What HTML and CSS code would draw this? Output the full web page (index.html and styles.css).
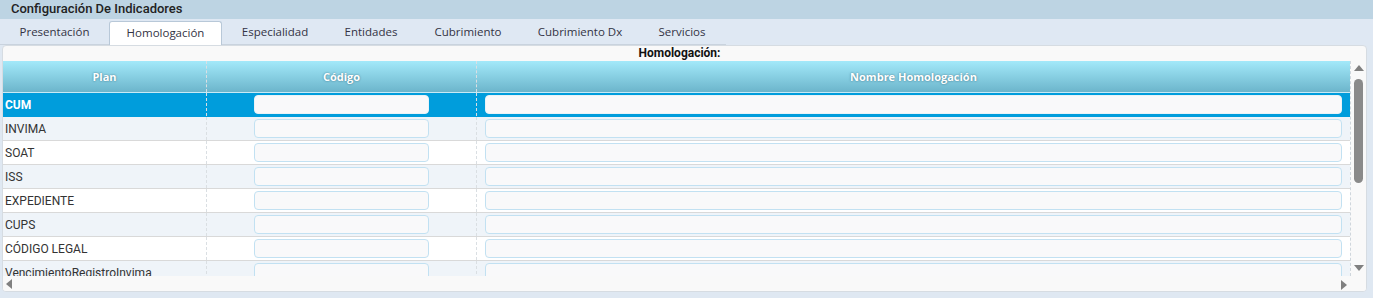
FILE: index.html
```html
<!DOCTYPE html>
<html lang="es">
<head>
  <meta charset="UTF-8">
  <title>Configuración De Indicadores</title>
  <link rel="stylesheet" href="styles.css">
</head>
<body>
  <!-- Title -->
  <div class="title-bar">Configuración De Indicadores</div>

  <!-- Tabs -->
  <div class="tab-bar">
    <div class="tabs">
      <div class="tab">Presentación</div>
      <div class="tab active">Homologación</div>
      <div class="tab">Especialidad</div>
      <div class="tab">Entidades</div>
      <div class="tab">Cubrimiento</div>
      <div class="tab">Cubrimiento Dx</div>
      <div class="tab">Servicios</div>
    </div>
  </div>

  <!-- Panel -->
  <div class="panel">
    <div class="panel-caption">Homologación:</div>
    <div class="grid-wrap">
      <div class="grid">
        <div class="grid-head">
          <div class="col col-plan">Plan</div>
          <div class="col col-code">Código</div>
          <div class="col col-name">Nombre Homologación</div>
        </div>
        <div class="grid-body">
          <div class="row selected">
            <div class="col col-plan">CUM</div>
            <div class="col col-code"><input class="field code-field"></div>
            <div class="col col-name"><input class="field"></div>
          </div>
          <div class="row alt">
            <div class="col col-plan">INVIMA</div>
            <div class="col col-code"><input class="field code-field"></div>
            <div class="col col-name"><input class="field"></div>
          </div>
          <div class="row">
            <div class="col col-plan">SOAT</div>
            <div class="col col-code"><input class="field code-field"></div>
            <div class="col col-name"><input class="field"></div>
          </div>
          <div class="row alt">
            <div class="col col-plan">ISS</div>
            <div class="col col-code"><input class="field code-field"></div>
            <div class="col col-name"><input class="field"></div>
          </div>
          <div class="row">
            <div class="col col-plan">EXPEDIENTE</div>
            <div class="col col-code"><input class="field code-field"></div>
            <div class="col col-name"><input class="field"></div>
          </div>
          <div class="row alt">
            <div class="col col-plan">CUPS</div>
            <div class="col col-code"><input class="field code-field"></div>
            <div class="col col-name"><input class="field"></div>
          </div>
          <div class="row">
            <div class="col col-plan">CÓDIGO LEGAL</div>
            <div class="col col-code"><input class="field code-field"></div>
            <div class="col col-name"><input class="field"></div>
          </div>
          <div class="row alt">
            <div class="col col-plan">VencimientoRegistroInvima</div>
            <div class="col col-code"><input class="field code-field"></div>
            <div class="col col-name"><input class="field"></div>
          </div>
        </div>
      </div>
      <!-- Vertical scrollbar -->
      <div class="vscroll">
        <span class="arrow-up"></span>
        <span class="thumb"></span>
        <span class="arrow-down"></span>
      </div>
    </div>
    <!-- Horizontal scrollbar -->
    <div class="hscroll">
      <span class="arrow-left"></span>
      <span class="arrow-right"></span>
    </div>
  </div>
</body>
</html>
```

FILE: styles.css
```css
* {
  margin: 0;
  padding: 0;
  box-sizing: border-box;
}
body {
  font-family: Roboto, 'Liberation Sans', sans-serif;
  font-size: 12px;
  color: #333;
  background: #dfe8f2;
  width: 1373px;
  height: 298px;
  overflow: hidden;
}

/* Title */
.title-bar {
  height: 19px;
  line-height: 18px;
  padding-left: 11px;
  background: #bdd4e3;
  color: #222;
  font-size: 13px;
  font-weight: 500;
}

/* Tabs */
.tab-bar {
  height: 26px;
  padding-top: 2px;
  background: #dfe8f3;
}
.tabs {
  display: flex;
  width: 726px;
  height: 24px;
  border-bottom: 1px solid #c9d3de;
}
.tab {
  height: 24px;
  line-height: 22px;
  font-family: 'Open Sans', 'Noto Sans', sans-serif;
  font-size: 11.5px;
  color: #334;
  text-align: center;
  white-space: nowrap;
}
.tab:nth-child(1) { width: 109px; }
.tab:nth-child(2) { width: 113px; }
.tab:nth-child(3) { width: 106px; }
.tab:nth-child(4) { width: 86px; }
.tab:nth-child(5) { width: 108px; }
.tab:nth-child(6) { width: 116px; }
.tab:nth-child(7) { width: 88px; }
.tab.active {
  background: #fff;
  border: 1px solid #b8c8d8;
  border-bottom: none;
  border-radius: 3px 3px 0 0;
}

/* Panel */
.panel {
  margin: 0 6px 0 2px;
  height: 247px;
  background: #f9f9f9;
  border: 1px solid #d6dce2;
  border-radius: 4px;
  overflow: hidden;
}
.panel-caption {
  height: 15px;
  line-height: 14px;
  text-align: center;
  font-weight: 700;
  font-size: 12px;
  color: #111;
  padding-right: 10px;
}
.grid-wrap {
  display: flex;
  height: 215px;
}
.grid {
  width: 1349px;
  overflow: hidden;
  border-right: 1px dashed #cfd6dc;
}

/* Grid header */
.grid-head {
  display: flex;
  height: 32px;
  background: linear-gradient(#a3e9fa, #6cb5cb);
  border-bottom: 1px solid #c9eaf5;
  color: #fff;
  font-family: 'Open Sans', 'Noto Sans', sans-serif;
  font-weight: 700;
  font-size: 11px;
  text-shadow: 0 0 2px rgba(40, 90, 110, 0.8);
}
.grid-head .col {
  display: flex;
  align-items: center;
  justify-content: center;
}
.col {
  height: 100%;
}
.col-plan {
  width: 204px;
  border-right: 1px dashed #dadfe3;
}
.col-code {
  width: 270px;
  border-right: 1px dashed #dadfe3;
}
.col-name {
  flex: 1;
}

/* Grid rows */
.row {
  display: flex;
  height: 24px;
  background: #fff;
  border-bottom: 1px solid #d9d9d9;
}
.row.alt {
  background: #eff4f9;
}
.row.selected {
  background: #009ddc;
  color: #fff;
  font-weight: 700;
  border-bottom-color: #009ddc;
}
.row .col-plan {
  padding-left: 2px;
  line-height: 24px;
  white-space: nowrap;
}
.row .col-code,
.row .col-name {
  display: flex;
  align-items: center;
  justify-content: center;
  padding: 0 8px;
}
.field {
  display: block;
  height: 19px;
  width: 100%;
  background: #f9f9fa;
  border: 1px solid #c2e1f2;
  border-radius: 4px;
  outline: none;
}
.code-field {
  width: 175px;
}
.selected .field {
  border-color: #e9f3f8;
}

/* Vertical scrollbar */
.vscroll {
  width: 15px;
  position: relative;
  background: #f9f9f9;
}
.arrow-up,
.arrow-down {
  position: absolute;
  left: 3px;
  width: 0;
  height: 0;
  border-left: 5px solid transparent;
  border-right: 5px solid transparent;
}
.arrow-up {
  top: 4px;
  border-bottom: 6px solid #808080;
}
.arrow-down {
  top: 204px;
  border-top: 6px solid #808080;
}
.thumb {
  position: absolute;
  left: 3px;
  top: 18px;
  width: 9px;
  height: 104px;
  background: #8a8a8a;
  border-radius: 5px;
}

/* Horizontal scrollbar */
.hscroll {
  position: relative;
  height: 15px;
  background: #f9f9f9;
}
.arrow-left,
.arrow-right {
  position: absolute;
  top: 3px;
  width: 0;
  height: 0;
  border-top: 5px solid transparent;
  border-bottom: 5px solid transparent;
}
.arrow-left {
  left: 3px;
  border-right: 6px solid #808080;
}
.arrow-right {
  left: 1338px;
  top: 4px;
  border-left: 6px solid #808080;
}
```
